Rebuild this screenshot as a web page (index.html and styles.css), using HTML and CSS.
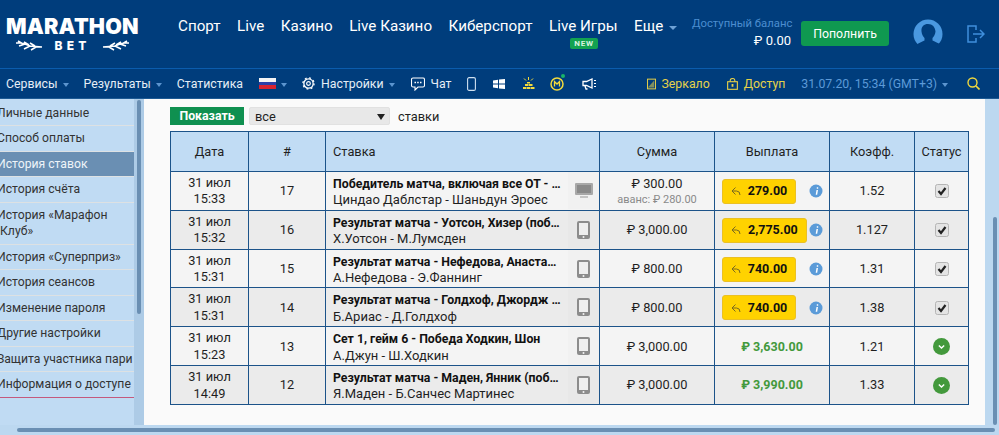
FILE: index.html
```html
<!DOCTYPE html>
<html lang="ru">
<head>
<meta charset="utf-8">
<title>История ставок</title>
<link rel="stylesheet" href="styles.css">
</head>
<body>
<svg class="defs" width="0" height="0" aria-hidden="true">
  <symbol id="phone" viewBox="0 0 13 18"><rect x="0" y="0" width="13" height="18" rx="2" fill="#8c8c8c"/><rect x="2" y="2" width="9" height="12" fill="#eeeeee"/><circle cx="6.5" cy="16" r="1" fill="#f2f2f2"/></symbol>
  <symbol id="pc" viewBox="0 0 18 16"><rect x="0" y="0" width="18" height="12" rx="1" fill="#a8a8a8"/><rect x="2" y="2" width="14" height="8" fill="#8a8a8a"/><rect x="5" y="13" width="8" height="2" fill="#c4c4c4"/></symbol>
  <symbol id="back" viewBox="0 0 10 10"><path d="M4.500 1.500 1 5l3.500 3.500M1 5h4.500Q9 5 9 9" fill="none" stroke="#7a6a20" stroke-width="1"/></symbol>
  <symbol id="info" viewBox="0 0 14 14"><circle cx="7" cy="7" r="6.500" fill="#5b9bd8"/><path d="M7.800 3.200h1.400v1.500H7.800zM7.500 6h1.500l-.8 4.800H6.700z" fill="#fff"/></symbol>
  <symbol id="box" viewBox="0 0 14 14"><rect x=".5" y=".5" width="13" height="13" rx="2" fill="#e4e4e4" stroke="#b5b5b5"/><path d="M3.500 7 6 10l4.500-6" fill="none" stroke="#222" stroke-width="2.200"/></symbol>
  <symbol id="ok" viewBox="0 0 16 16"><circle cx="8" cy="8" r="8" fill="#43993c"/><path d="M5.500 7 8 9.500 10.500 7" fill="none" stroke="#fff" stroke-width="1.300"/></symbol>
</svg>

<header class="top">
  <div class="logo">
    <div class="logo-name">MARATHON</div>
    <div class="logo-sub">
      <svg class="laurel" viewBox="0 0 28 12"><path d="M1 3h5l4 1 5 2 12 1M3 1l5 3M4 6l6-2M9 2l5 3M9 9l6-3M15 3l5 3M16 10l5-3" fill="none" stroke="#fff" stroke-width="1.500"/></svg>
      <span>BET</span>
      <svg class="laurel flip" viewBox="0 0 28 12"><path d="M1 3h5l4 1 5 2 12 1M3 1l5 3M4 6l6-2M9 2l5 3M9 9l6-3M15 3l5 3M16 10l5-3" fill="none" stroke="#fff" stroke-width="1.500"/></svg>
    </div>
  </div>
  <nav class="main-nav">
    <a>Спорт</a><a>Live</a><a>Казино</a><a>Live Казино</a><a>Киберспорт</a>
    <a class="has-badge">Live Игры<span class="badge">NEW</span></a>
    <a>Еще<i class="caret"></i></a>
  </nav>
  <div class="balance">
    <div class="balance-label">Доступный баланс</div>
    <div class="balance-value">₽ 0.00</div>
  </div>
  <button class="topup">Пополнить</button>
  <svg class="avatar" viewBox="0 0 30 30" width="30" height="30"><circle cx="15" cy="15" r="14.500" fill="#4a98e0"/><path d="M15 5c-4.500 0-7 3-6.500 7.500.3 3 1.500 5 3 6.500v2.500c-2 1.200-5 1.800-8 4.300l3 5h17l4-5c-3-2.500-6-3.100-8-4.300V19c1.500-1.500 2.700-3.500 3-6.500C22 8 19.500 5 15 5z" fill="#003d7c"/></svg>
  <svg class="logout" viewBox="0 0 18 18" width="18" height="18"><path d="M9 5V1H1v16h8v-4M6 9h11M13 5l4 4-4 4" fill="none" stroke="#3f8fdc" stroke-width="1.500"/></svg>
</header>

<nav class="sub">
  <a>Сервисы<i class="caret sm"></i></a>
  <a class="m-res">Результаты<i class="caret sm"></i></a>
  <a class="m-stat">Статистика</a>
  <a class="m-flag"><span class="flag"></span><i class="caret sm"></i></a>
  <a class="m-set">
    <svg viewBox="0 0 14 14" width="13" height="13"><circle cx="7" cy="7" r="2" fill="none" stroke="#fff" stroke-width="1.200"/><circle cx="7" cy="7" r="5" fill="none" stroke="#fff" stroke-width="1.400"/><circle cx="7" cy="7" r="6" fill="none" stroke="#fff" stroke-width="1.400" stroke-dasharray="2 2.700"/></svg>
    Настройки<i class="caret sm"></i></a>
  <a class="m-chat">
    <svg viewBox="0 0 14 14" width="14" height="14"><path d="M2 1h10a1.500 1.500 0 0 1 1.500 1.500v6A1.500 1.500 0 0 1 12 10H7l-3 3v-3H2A1.500 1.500 0 0 1 .5 8.500v-6A1.500 1.500 0 0 1 2 1z" fill="none" stroke="#fff" stroke-width="1.100"/><path d="M3.500 5.500h1.500M6.200 5.500h1.500M9 5.500h1.500" stroke="#fff" stroke-width="1.300"/></svg>
    Чат</a>
  <svg class="m-ph" viewBox="0 0 9 14" width="9" height="14"><rect x=".6" y=".6" width="7.800" height="12.800" rx="1.500" fill="none" stroke="#cfe0f0" stroke-width="1.100"/></svg>
  <svg class="m-win" viewBox="0 0 12 10" width="12" height="10"><path d="M0 1.500 5 .7V4.500H0zM6 .5 12 0v4.500H6zM0 5.500h5v3.800l-5-.7zM6 5.500h6V10l-6-.6z" fill="#fff"/></svg>
  <svg class="m-gold" viewBox="0 0 13 13" width="13" height="13"><path d="M1 12h3.500v-2H1zM5 12h3.500v-2H5zM9 12h3.500v-2H9zM3 9h3.500V7H3zM7 9h3.500V7H7zM5 6.500h3V5H5z" fill="#f2da3d"/><path d="M6.500 0v3M2 1.500 4 3.500M11 1.500 9 3.500" stroke="#f2da3d" stroke-width="1"/></svg>
  <span class="m-m">
    <svg viewBox="0 0 15 15" width="15" height="15"><circle cx="7" cy="8" r="6" fill="none" stroke="#f2da3d" stroke-width="1.500"/><path d="M4.500 10.500V5.500L7 8l2.500-2.500v5" fill="none" stroke="#f2da3d" stroke-width="1.300"/></svg>
    <i class="dot"></i>
  </span>
  <svg class="m-horn" viewBox="0 0 15 12" width="15" height="12"><path d="M1 3.500h3.500L10 1v9L4.500 7.500H1zM3 8l1 3h1.500" fill="none" stroke="#fff" stroke-width="1.300"/><path d="M12 2.500h2M12 5.500h2M12 8.500h2" stroke="#fff" stroke-width="1"/></svg>
  <a class="y m-mirror">
    <svg viewBox="0 0 10 12" width="9" height="12"><rect x=".6" y=".6" width="8.800" height="10.800" fill="none" stroke="#e8d147" stroke-width="1.100"/><path d="M1 10 8 2v8z" fill="#e8d147" opacity=".55"/></svg>
    Зеркало</a>
  <a class="y m-access">
    <svg viewBox="0 0 12 13" width="11" height="12"><rect x=".7" y="4" width="10.600" height="8.300" fill="none" stroke="#e8d147" stroke-width="1.200"/><path d="M3.500 4V2.500a2.500 2 0 0 1 5 0V4" fill="none" stroke="#e8d147" stroke-width="1.200"/><rect x="5" y="6.500" width="2" height="3" fill="#e8d147"/></svg>
    Доступ</a>
  <a class="date">31.07.20, 15:34 (GMT+3)<i class="caret sm"></i></a>
  <svg class="m-search" viewBox="0 0 13 13" width="13" height="13"><circle cx="5.500" cy="5.500" r="4.500" fill="none" stroke="#f2da3d" stroke-width="1.400"/><path d="m9 9 3.500 3.500" stroke="#f2da3d" stroke-width="1.600"/></svg>
</nav>

<div class="page">
  <aside class="side">
    <ul class="menu">
      <li>Личные данные</li>
      <li>Способ оплаты</li>
      <li class="on">История ставок</li>
      <li>История счёта</li>
      <li>История «Марафон<br>Клуб»</li>
      <li>История «Суперприз»</li>
      <li>История сеансов</li>
      <li>Изменение пароля</li>
      <li>Другие настройки</li>
      <li>Защита участника пари</li>
      <li class="last">Информация о доступе</li>
    </ul>
    <div class="side-track"><div class="side-thumb"></div></div>
  </aside>
  <main class="content">
    <form class="filter">
      <button type="button" class="show">Показать</button>
      <div class="select">все<i class="sel-arrow"></i></div>
      <span>ставки</span>
    </form>
    <table class="bets">
      <colgroup><col class="c1"><col class="c2"><col class="c3"><col class="c4"><col class="c5"><col class="c6"><col class="c7"></colgroup>
      <thead><tr><th>Дата</th><th>#</th><th class="left">Ставка</th><th>Сумма</th><th>Выплата</th><th>Коэфф.</th><th>Статус</th></tr></thead>
      <tbody>
        <tr>
          <td>31 июл<br>15:33</td><td>17</td>
          <td class="stake"><div class="stake-in"><div class="stake-text"><b>Победитель матча, включая все ОТ - Шандун Эроес</b><span>Циндао Даблстар - Шаньдун Эроес</span></div><div class="dev"><svg width="18" height="16"><use href="#pc"/></svg></div></div></td>
          <td>₽ 300.00<small>аванс: ₽ 280.00</small></td>
          <td class="pay"><div class="pay-in w1"><span class="sell"><svg width="10" height="10"><use href="#back"/></svg>279.00</span><svg class="info" width="14" height="14"><use href="#info"/></svg></div></td>
          <td>1.52</td><td><svg class="st" width="14" height="14"><use href="#box"/></svg></td>
        </tr>
        <tr>
          <td>31 июл<br>15:32</td><td>16</td>
          <td class="stake"><div class="stake-in"><div class="stake-text"><b>Результат матча - Уотсон, Хизер (победа)</b><span>Х.Уотсон - М.Лумсден</span></div><div class="dev"><svg width="13" height="18"><use href="#phone"/></svg></div></div></td>
          <td>₽ 3,000.00</td>
          <td class="pay"><div class="pay-in"><span class="sell"><svg width="10" height="10"><use href="#back"/></svg>2,775.00</span><svg class="info" width="14" height="14"><use href="#info"/></svg></div></td>
          <td>1.127</td><td><svg class="st" width="14" height="14"><use href="#box"/></svg></td>
        </tr>
        <tr>
          <td>31 июл<br>15:31</td><td>15</td>
          <td class="stake"><div class="stake-in"><div class="stake-text"><b>Результат матча - Нефедова, Анастасия (победа)</b><span>А.Нефедова - Э.Фаннинг</span></div><div class="dev"><svg width="13" height="18"><use href="#phone"/></svg></div></div></td>
          <td>₽ 800.00</td>
          <td class="pay"><div class="pay-in w1"><span class="sell"><svg width="10" height="10"><use href="#back"/></svg>740.00</span><svg class="info" width="14" height="14"><use href="#info"/></svg></div></td>
          <td>1.31</td><td><svg class="st" width="14" height="14"><use href="#box"/></svg></td>
        </tr>
        <tr>
          <td>31 июл<br>15:31</td><td>14</td>
          <td class="stake"><div class="stake-in"><div class="stake-text"><b>Результат матча - Голдхоф, Джордж (победа)</b><span>Б.Ариас - Д.Голдхоф</span></div><div class="dev"><svg width="13" height="18"><use href="#phone"/></svg></div></div></td>
          <td>₽ 800.00</td>
          <td class="pay"><div class="pay-in w1"><span class="sell"><svg width="10" height="10"><use href="#back"/></svg>740.00</span><svg class="info" width="14" height="14"><use href="#info"/></svg></div></td>
          <td>1.38</td><td><svg class="st" width="14" height="14"><use href="#box"/></svg></td>
        </tr>
        <tr>
          <td>31 июл<br>15:23</td><td>13</td>
          <td class="stake"><div class="stake-in"><div class="stake-text"><b>Сет 1, гейм 6 - Победа Ходкин, Шон</b><span>А.Джун - Ш.Ходкин</span></div><div class="dev"><svg width="13" height="18"><use href="#phone"/></svg></div></div></td>
          <td>₽ 3,000.00</td>
          <td class="win">₽ 3,630.00</td>
          <td>1.21</td><td><svg class="st" width="17" height="17"><use href="#ok"/></svg></td>
        </tr>
        <tr>
          <td>31 июл<br>14:49</td><td>12</td>
          <td class="stake"><div class="stake-in"><div class="stake-text"><b>Результат матча - Маден, Янник (победа)</b><span>Я.Маден - Б.Санчес Мартинес</span></div><div class="dev"><svg width="13" height="18"><use href="#phone"/></svg></div></div></td>
          <td>₽ 3,000.00</td>
          <td class="win">₽ 3,990.00</td>
          <td>1.33</td><td><svg class="st" width="17" height="17"><use href="#ok"/></svg></td>
        </tr>
      </tbody>
    </table>
  </main>
  <div class="right-track"><div class="right-thumb"></div></div>
</div>
<div class="bottom-track"><div class="bottom-thumb"></div></div>
</body>
</html>
```

FILE: styles.css
```css
* { box-sizing: border-box; }
html, body { margin: 0; height: 435px; overflow: hidden; }
body { width: 999px; font-family: Roboto, "Liberation Sans", sans-serif; background: #c0dbf3; color: #1f1f1f; }
.defs { position: absolute; }
a { display: inline-flex; align-items: center; white-space: nowrap; }
svg { flex: none; }

.top { height: 69px; background: #003d7c; border-bottom: 1px solid #0b5cad; display: flex; align-items: flex-start; color: #fff; }
.logo { width: 178px; padding: 15px 0 0 6px; flex: none; }
.logo-name { font: 900 21.500px/22px Inter, sans-serif; letter-spacing: .2px; }
.logo-sub { width: 133px; display: flex; justify-content: center; align-items: center; gap: 11px; font: 800 12px/13px Inter, sans-serif; letter-spacing: 4.200px; margin-top: 2px; }
.laurel { width: 28px; height: 12px; }
.flip { transform: scaleX(-1); }

.main-nav { display: flex; gap: 16.500px; padding-top: 17px; font-size: 15.200px; line-height: 19px; width: 514px; flex: none; }
.has-badge { position: relative; }
.badge { position: absolute; left: 21px; top: 21px; width: 28px; height: 11px; border-radius: 2px; background: #12a251; color: #d9f2e2; font: 700 8px/11px Roboto, sans-serif; letter-spacing: .8px; text-align: center; }
.caret { display: inline-block; width: 0; height: 0; margin: 2px 0 0 6px; border: 4px solid transparent; border-top: 4px solid #6ea2d6; border-bottom: 0; }
.caret.sm { margin-left: 5px; border-width: 4px 3.500px 0; border-top-color: #5c95cf; }

.balance { width: 99px; flex: none; padding-top: 17px; text-align: right; }
.balance-label { font-size: 11.300px; line-height: 14px; color: #4c8ed0; white-space: nowrap; }
.balance-value { font-size: 13px; line-height: 15px; margin-top: 2px; }
.topup { margin: 21px 0 0 10px; width: 88px; height: 25px; border: 0; border-radius: 3px; background: #0f9950; color: #fff; font: 400 12.300px Roboto, sans-serif; }
.avatar { margin: 19px 0 0 24px; }
.logout { margin: 25px 0 0 24px; }

.sub { height: 30px; background: #003d7c; border-bottom: 1px solid #1d5a94; display: flex; align-items: center; padding-left: 6px; color: #e6eef6; font-size: 12.300px; white-space: nowrap; }
.sub a svg { margin-right: 6px; }
.m-res { margin-left: 15px; }
.m-stat { margin-left: 15px; }
.m-flag { margin-left: 16px; }
.flag { width: 17px; height: 11px; background: linear-gradient(#f4f4f4 0 33%, #2b3fa8 33% 66%, #d8232f 66%); }
.m-set { margin-left: 15px; }
.m-chat { margin-left: 16px; }
.m-ph { margin-left: 15px; }
.m-win { margin-left: 17px; }
.m-gold { margin-left: 17px; }
.m-m { position: relative; margin-left: 15px; display: flex; }
.dot { position: absolute; right: 0; top: -2px; width: 4px; height: 4px; border-radius: 50%; background: #18b46a; }
.m-horn { margin-left: 17px; }
.y { color: #e6d24a; }
.m-mirror { margin-left: 50px; }
.m-access { margin-left: 17px; }
.date { margin-left: 16px; color: #5c9ad8; }
.m-search { margin-left: 19px; }

.page { height: 326px; display: flex; }
.side { width: 144px; flex: none; display: flex; background: #c0dbf3; }
.menu { list-style: none; margin: 0; padding: 1.500px 0 0; width: 134px; font-size: 12.200px; line-height: 16.500px; white-space: nowrap; }
.menu li { padding: 4px 0 4px; border-bottom: 1.400px solid #dde1e3; color: #333; text-indent: -3px; }
.menu li.on { background: #6a8fb3; color: #eef4f9; }
.menu li.last { border-bottom-color: #c4597d; }
.side-track { width: 10px; background: #adcbe6; padding: 1px 0 0 3px; }
.side-thumb { width: 4px; height: 214px; border-radius: 2px; background: #6a8fb3; }

.content { flex: 1; min-width: 0; background: #fafafa; padding: 8px 17px 0 26px; font-size: 12.800px; }
.filter { display: flex; align-items: center; height: 18px; gap: 5px; margin-bottom: 6px; }
.show { width: 74px; height: 18px; padding: 0; border: 0; background: #0f9050; color: #fff; font: 700 12.300px Roboto, sans-serif; }
.select { position: relative; width: 141px; height: 18px; padding-left: 5px; line-height: 17px; background: #e8e8e8; border: 1px solid #e1e1e1; border-radius: 2px; }
.sel-arrow { position: absolute; right: 4px; top: 6px; border: 4px solid transparent; border-top: 6px solid #222; border-bottom: 0; }
.filter span { margin-left: 3px; }

.bets { table-layout: fixed; width: 798px; border-collapse: collapse; border: 1.500px solid #1c5389; line-height: 16.400px; }
.c1 { width: 78px; } .c2 { width: 77px; } .c3 { width: 274px; } .c4 { width: 115px; } .c5 { width: 115px; } .c6 { width: 85px; } .c7 { width: 54px; }
.bets th, .bets td { border: 1.500px solid #1c5389; padding: 0; text-align: center; vertical-align: middle; }
.bets th { height: 40px; padding-top: 2px; background: #c1dcf4; font-weight: 400; font-size: 12.800px; }
.bets th.left { text-align: left; padding-left: 7px; }
.bets td { height: 38.830px; padding-top: 1px; background: #f4f4f4; }
.bets td.stake { padding-top: 0; }
.bets tbody tr:nth-child(even) td { background: #ebebeb; }
.bets small { display: block; font-size: 11px; line-height: 14px; color: #8a8a8a; }
.stake-in { display: flex; height: 37px; align-items: stretch; }
.stake-text { width: 242px; padding: 3.500px 7px 0; text-align: left; line-height: 16.400px; font-size: 13px; }
.stake-text b, .stake-text span { display: block; overflow: hidden; white-space: nowrap; text-overflow: ellipsis; }
.stake-text b { font-weight: 700; font-size: 12.300px; color: #111; }
.dev { width: 31px; flex: none; display: flex; align-items: center; justify-content: center; background: rgba(0,0,0,.012); }
.pay-in { display: flex; align-items: center; justify-content: space-between; padding: 0 6px 0 7px; }
.sell { display: inline-flex; align-items: center; justify-content: center; gap: 7px; height: 25px; padding: 0 8px; background: #ffd200; border: 1px solid #ebc024; border-radius: 3px; font-weight: 700; font-size: 12.500px; color: #111; }
.w1 .sell { width: 74px; }
.info, .st { display: block; }
.st { margin: 0 auto; }
.win { color: #43993c; font-weight: 700; font-size: 12.500px; }

.right-track { width: 14px; flex: none; background: #bcd8f0; padding: 118px 0 0 8px; }
.right-thumb { width: 4px; height: 208px; background: #6a8fb3; border-radius: 2px; }
.bottom-track { height: 10px; background: #bcd8f0; padding: 3px 4px 0 17px; }
.bottom-thumb { height: 4px; background: #6a8fb3; border-radius: 2px; }
```
